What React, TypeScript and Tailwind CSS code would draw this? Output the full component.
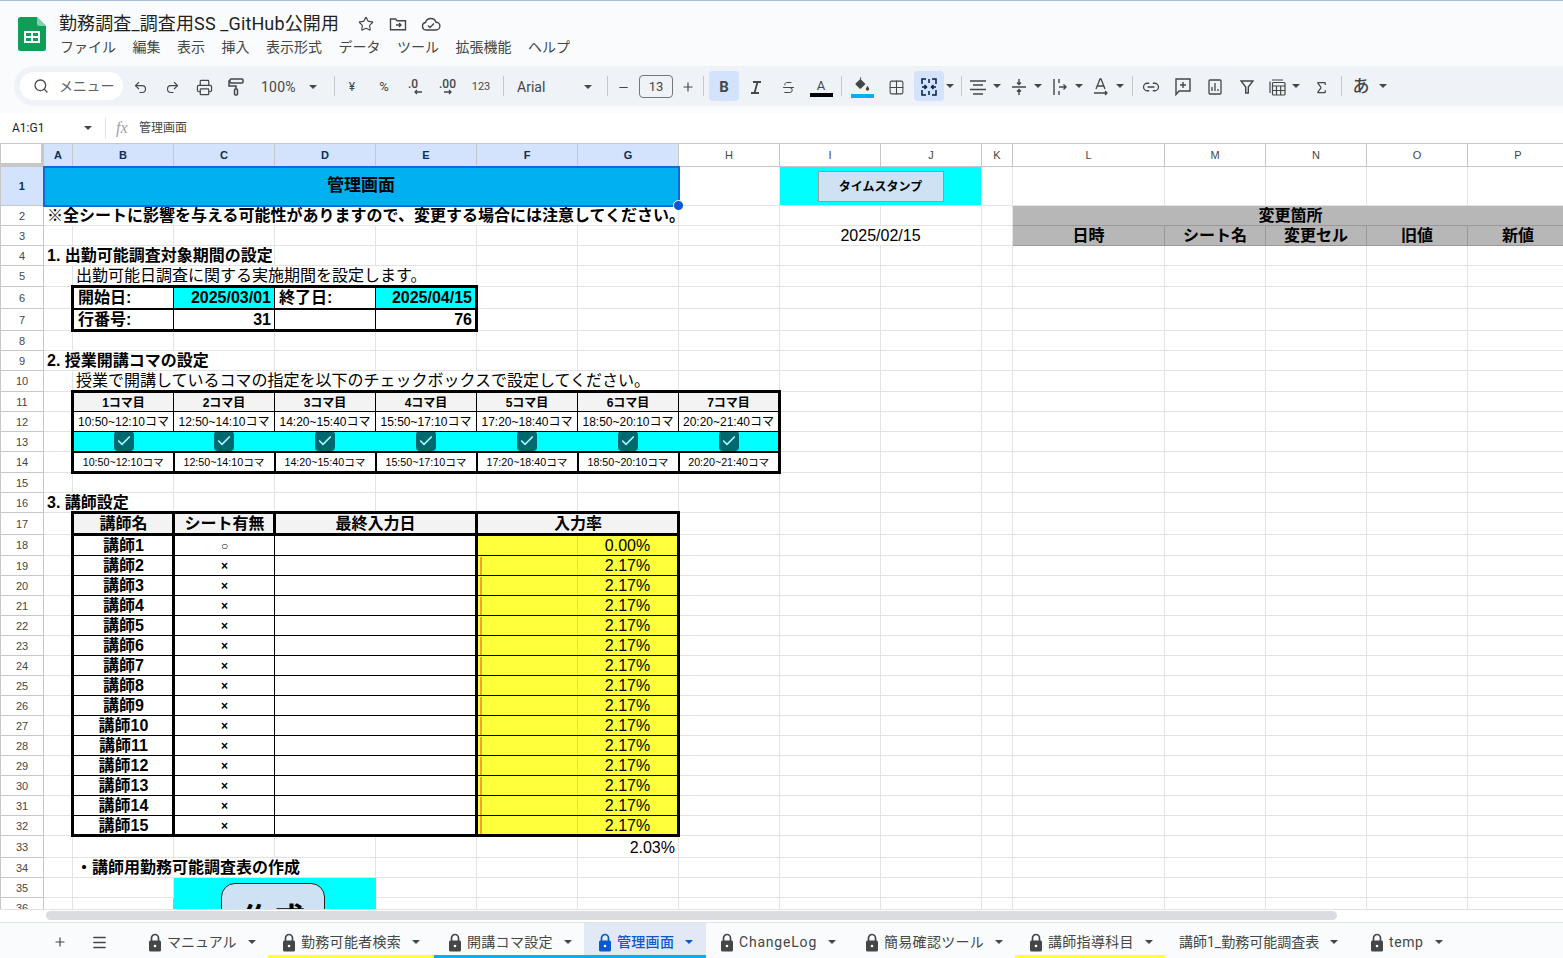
import React from 'react';
import {
  Check,
  Grid2x2,
  Link2,
  Menu,
  Minus,
  Plus,
  Printer,
  Redo2,
  Search,
  Sigma,
  Star,
  Strikethrough,
  Undo2,
} from 'lucide-react';

const teachers = ['講師2', '講師3', '講師4', '講師5', '講師6', '講師7', '講師8', '講師9', '講師10', '講師11', '講師12', '講師13', '講師14', '講師15'];
const slots = ['10:50~12:10コマ', '12:50~14:10コマ', '14:20~15:40コマ', '15:50~17:10コマ', '17:20~18:40コマ', '18:50~20:10コマ', '20:20~21:40コマ'];
const columnWidths = ['w-[43px]', 'w-[29px]', 'w-[101px]', 'w-[101px]', 'w-[101px]', 'w-[101px]', 'w-[101px]', 'w-[101px]', 'w-[101px]', 'w-[101px]', 'w-[101px]', 'w-[31px]', 'w-[152px]', 'w-[101px]', 'w-[101px]', 'w-[101px]', 'w-[101px]'];
const columnLetters = ['A', 'B', 'C', 'D', 'E', 'F', 'G', 'H', 'I', 'J', 'K', 'L', 'M', 'N', 'O', 'P'];

const Caret = ({ className = 'w-[12px]', color = 'fill-[#444746]' }: { className?: string; color?: string }) => (
  <span className={`flex shrink-0 items-center justify-center ${className}`}>
    <svg width="8" height="4" viewBox="0 0 8 4"><path d="M0 0h8L4 4z" className={color} /></svg>
  </span>
);

const Sep = ({ className = '' }: { className?: string }) => <div className={`h-[20px] w-px shrink-0 bg-[#c7c7c7] ${className}`} />;

const Btn = ({ w = 'w-[30px]', className = '', children }: { w?: string; className?: string; children: React.ReactNode }) => (
  <div className={`flex h-[30px] shrink-0 items-center justify-center pt-[2px] text-[#444746] ${w} ${className}`}>{children}</div>
);

const Lock = ({ color = '#444746' }: { color?: string }) => (
  <svg width="14" height="19" viewBox="0 0 14 19" className="shrink-0">
    <path d="M3.5 8V5a3.5 3.5 0 0 1 7 0v3" fill="none" stroke={color} strokeWidth="1.7" />
    <rect x="1" y="7.5" width="12" height="11" rx="1.5" fill={color} />
    <circle cx="7" cy="13" r="1.3" fill="#fff" />
  </svg>
);

const Td = ({ className = '', ...rest }: React.TdHTMLAttributes<HTMLTableCellElement>) => (
  <td className={`border border-[#e2e3e3] px-0 pt-px pb-0 ${className}`} {...rest} />
);

// cell of one of the black ruled tables
const Bx = ({ className = '', ...rest }: React.TdHTMLAttributes<HTMLTableCellElement>) => (
  <td className={`border border-black px-0 pt-px pb-0 ${className}`} {...rest} />
);

const Blanks = ({ n }: { n: number }) => (
  <>
    {Array.from({ length: n }).map((_, i) => (
      <Td key={i} />
    ))}
  </>
);

const RowHead = ({ n, selected = false }: { n: number; selected?: boolean }) => (
  <td
    className={`border border-[#c7c7c7] p-0 text-center text-[11px] ${
      selected ? 'bg-[#d3e3fd] font-bold text-[#0b2e5c]' : 'bg-white text-[#444746]'
    }`}
  >
    {n}
  </td>
);

const Tab = ({
  label,
  width,
  locked = true,
  active = false,
  bar = '',
  text = 'tracking-[0.3px]',
}: {
  label: string;
  width: string;
  locked?: boolean;
  active?: boolean;
  bar?: string;
  text?: string;
}) => (
  <div className={`relative flex h-full shrink-0 items-center pt-[3px] pl-[14px] ${width} ${active ? 'bg-[#e1e9f7]' : ''}`}>
    {locked && <Lock color={active ? '#0b57d0' : '#444746'} />}
    <span className={`text-[14px] whitespace-nowrap ${locked ? 'ml-[5px]' : ''} ${active ? 'font-medium text-[#0b57d0]' : 'text-[#444746]'} ${text}`}>{label}</span>
    <Caret className="ml-[11px] w-[8px]" color={active ? 'fill-[#0b57d0]' : 'fill-[#444746]'} />
    {bar && <div className={`absolute right-0 bottom-0 left-0 h-[3px] ${bar}`} />}
  </div>
);

export default function App() {
  return (
    <div className="flex h-screen w-full flex-col overflow-hidden bg-[#f9fbfd] [font-family:Roboto,'Noto_Sans_CJK_JP',sans-serif] text-[#1f1f1f]">
      {/* Title bar and menus */}
      <div className="flex h-[66px] shrink-0 border-t border-[#a9c0d8] pl-[18px]">
        <svg width="28" height="34" viewBox="0 0 28 34" className="mt-[16px] shrink-0">
          <path d="M2.5 0H19l9 9v22.5a2.5 2.5 0 0 1-2.5 2.5h-23A2.5 2.5 0 0 1 0 31.500v-29A2.500 2.500 0 0 1 2.500 0z" fill="#0f9d58" />
          <path d="M19 0l9 9h-6.500A2.500 2.500 0 0 1 19 6.500z" fill="#87ceac" />
          <path d="M6 14h16v12H6z" fill="#fff" />
          <path d="M8 16h5v3H8zM15 16h5v3h-5zM8 21h5v3H8zM15 21h5v3h-5z" fill="#0f9d58" />
        </svg>
        <div className="ml-[13px] flex min-w-0 flex-col">
          <div className="mt-[11px] flex h-[24px] items-center">
            <span className="w-[280px] text-[18px] leading-[24px] tracking-[0.12px] whitespace-nowrap">勤務調査_調査用SS _GitHub公開用</span>
            <Star className="ml-[19px] text-[#444746]" size={16} strokeWidth={1.7} />
            <svg width="18" height="16" viewBox="0 0 18 16" fill="none" stroke="#444746" strokeWidth="1.4" className="ml-[15px]">
              <path d="M1.500 3h5l1.500 1.700h8.500v9h-15z" />
              <path d="M7 9h5M10 7l2 2-2 2" />
            </svg>
            <svg width="20" height="14" viewBox="0 0 20 14" fill="none" stroke="#444746" strokeWidth="1.400" className="ml-[14px]">
              <path d="M5 13a3.800 3.800 0 0 1-.5-7.500A5.500 5.500 0 0 1 15 5.200a3.900 3.900 0 0 1 0 7.800z" />
              <path d="M7 8.500l2 2 4-4" />
            </svg>
          </div>
          <div className="mt-[1px] flex gap-[16.500px] pl-[1px] text-[14px] leading-[20px] text-[#444746]">
            {['ファイル', '編集', '表示', '挿入', '表示形式', 'データ', 'ツール', '拡張機能', 'ヘルプ'].map((m) => (
              <span key={m} className="whitespace-nowrap">{m}</span>
            ))}
          </div>
        </div>
      </div>

      {/* Toolbar */}
      <div className="ml-[14px] flex h-[40px] shrink-0 items-center rounded-l-[20px] bg-[#eff3f8] pl-[6px]">
        <div className="flex h-[28px] w-[103px] shrink-0 items-center rounded-full bg-white pl-[13px] text-[14px] text-[#5f6368]">
          <Search size={16} strokeWidth={1.900} className="text-[#444746]" />
          <span className="ml-[10px] whitespace-nowrap tracking-[-0.2px]">メニュー</span>
        </div>
        <Btn w="w-[32px]" className="ml-[1px]"><Undo2 size={15} strokeWidth={1.800} /></Btn>
        <Btn w="w-[32px]"><Redo2 size={15} strokeWidth={1.800} /></Btn>
        <Btn w="w-[32px]"><Printer size={17} strokeWidth={1.700} /></Btn>
        <Btn w="w-[32px]">
          <svg width="16" height="18" viewBox="0 0 16 18" fill="none" stroke="#444746" strokeWidth="1.500">
            <rect x="2" y="1" width="13" height="4" rx="1" />
            <path d="M2 3H1v5h7v3" />
            <rect x="6.500" y="11" width="3" height="6" rx="1" />
          </svg>
        </Btn>
        <div className="flex w-[82px] shrink-0 items-center pt-[2px] pl-[9px] text-[14px] tracking-[0.2px] text-[#444746]">
          <span>100%</span>
          <Caret className="ml-[10px] w-[14px]" />
        </div>
        <Sep className="mr-[1px]" />
        <Btn w="w-[32px]" className="text-[12px]">¥</Btn>
        <Btn w="w-[32px]" className="text-[13px]">%</Btn>
        <Btn w="w-[32px]">
          <svg width="18" height="18" viewBox="0 0 18 18">
            <text x="1" y="10" fontSize="12" fill="#444746" fontWeight="500">.0</text>
            <path d="M15 14H8M10 12l-2 2 2 2" fill="none" stroke="#444746" strokeWidth="1.300" />
          </svg>
        </Btn>
        <Btn w="w-[32px]">
          <svg width="20" height="18" viewBox="0 0 20 18">
            <text x="1" y="10" fontSize="12" fill="#444746" fontWeight="500">.00</text>
            <path d="M6 14h7M11 12l2 2-2 2" fill="none" stroke="#444746" strokeWidth="1.300" />
          </svg>
        </Btn>
        <Btn w="w-[32px]" className="ml-[1px] text-[11px]">123</Btn>
        <Sep className="ml-[6px]" />
        <div className="flex w-[103px] shrink-0 items-center pt-[2px] pl-[13px] text-[14px] text-[#444746]">
          <span className="w-[65px]">Arial</span>
          <Caret className="w-[12px]" />
        </div>
        <Sep />
        <Btn w="w-[31px]"><Minus size={13} strokeWidth={2} /></Btn>
        <div className="mt-[1px] flex h-[23px] w-[34px] shrink-0 items-center justify-center rounded-[4px] border border-[#747775] text-[13px] text-[#444746]">13</div>
        <Btn><Plus size={14} strokeWidth={2} /></Btn>
        <Sep />
        <Btn className="ml-[5px] rounded-[4px] bg-[#d3e3fd] text-[15px] font-bold text-[#041e49]">B</Btn>
        <Btn className="ml-[2px]">
          <svg width="12" height="13" viewBox="0 0 12 13" fill="none" stroke="#444746" strokeWidth="1.800">
            <path d="M3 1h8M1 12h8M7.500 1L4.500 12" />
          </svg>
        </Btn>
        <Btn className="ml-[2px]"><Strikethrough size={15} strokeWidth={1.600} /></Btn>
        <Btn className="ml-[3px]">
          <div className="flex flex-col items-center">
            <span className="text-[13px] leading-[15px]">A</span>
            <div className="h-[4px] w-[23px] bg-black" />
          </div>
        </Btn>
        <Sep className="ml-[5px]" />
        <Btn className="ml-[5px]">
          <div className="flex flex-col items-center">
            <svg width="15" height="15" viewBox="0 0 15 15" className="fill-[#444746]">
              <path d="M5.500 0l1 1-1 1 5 5-4.500 4.500a1 1 0 0 1-1.400 0L.800 7.700a1 1 0 0 1 0-1.400L4.800 2.500z" />
              <path d="M12.500 9s1.700 2 1.700 3a1.700 1.700 0 0 1-3.400 0c0-1 1.700-3 1.700-3z" />
            </svg>
            <div className="mt-[2px] h-[4px] w-[23px] bg-[#00b0f0]" />
          </div>
        </Btn>
        <Btn className="ml-[4px]"><Grid2x2 size={17} strokeWidth={1.500} /></Btn>
        <Btn className="ml-[3px] rounded-[4px] bg-[#d3e3fd]">
          <svg width="16" height="18" viewBox="0 0 16 18" fill="none" stroke="#041e49" strokeWidth="1.500">
            <path d="M5 1H1v5M11 1h4v5M5 17H1v-5M11 17h4v-5M1 9h4M3.500 7l2 2-2 2M15 9h-4M12.500 7l-2 2 2 2M8 1v4M8 13v4" />
          </svg>
        </Btn>
        <Caret />
        <Sep className="ml-[5px]" />
        <Btn w="w-[26px]" className="ml-[3px]">
          <svg width="16" height="15" viewBox="0 0 16 15" fill="none" stroke="#444746" strokeWidth="1.400">
            <path d="M0 1h16M3 5h10M0 9.500h16M3 14h10" />
          </svg>
        </Btn>
        <Caret />
        <Btn w="w-[26px]" className="ml-[3px]">
          <svg width="14" height="16" viewBox="0 0 14 16" fill="none" stroke="#444746" strokeWidth="1.400">
            <path d="M0 8h14M7 0v5M5 3.500L7 5.500l2-2M7 16v-5M5 12.500l2-2 2 2" />
          </svg>
        </Btn>
        <Caret />
        <Btn w="w-[26px]" className="ml-[3px]">
          <svg width="14" height="18" viewBox="0 0 14 18" fill="none" stroke="#444746" strokeWidth="1.400">
            <path d="M1 1v16M6 1v4M6 13v4M6 9h7M10.500 6.500L13 9l-2.500 2.500" />
          </svg>
        </Btn>
        <Caret />
        <Btn w="w-[26px]" className="ml-[3px]">
          <svg width="16" height="18" viewBox="0 0 16 18" fill="none" stroke="#444746" strokeWidth="1.300">
            <path d="M3 11l4-10h1l4 10M4.500 8h7M1 15h13M12 13l2 2-2 2" />
          </svg>
        </Btn>
        <Caret />
        <Sep className="ml-[6px]" />
        <Btn className="ml-[3px]"><Link2 size={18} strokeWidth={1.700} /></Btn>
        <Btn className="ml-[2px]">
          <svg width="16" height="18" viewBox="0 0 16 18" fill="none" stroke="#444746" strokeWidth="1.400">
            <path d="M1 1h14v12H4l-3 3.500zM8 4v6M5 7h6" />
          </svg>
        </Btn>
        <Btn className="ml-[2px]">
          <svg width="14" height="16" viewBox="0 0 14 16" fill="none" stroke="#444746" strokeWidth="1.300">
            <rect x="1" y="1" width="12" height="14" rx="1" />
            <path d="M4 12V8M7 12V4M10 12v-2" />
          </svg>
        </Btn>
        <Btn className="ml-[2px]">
          <svg width="14" height="14" viewBox="0 0 14 14" fill="none" stroke="#444746" strokeWidth="1.400">
            <path d="M1 1h12L8.300 7v6H5.700V7z" />
          </svg>
        </Btn>
        <Btn w="w-[26px]" className="ml-[2px]">
          <svg width="17" height="17" viewBox="0 0 17 17" fill="none" stroke="#444746" strokeWidth="1.200">
            <path d="M1 14V2.500M3 1h11" />
            <rect x="3.500" y="3.500" width="12.500" height="12.500" rx="1" />
            <path d="M3.500 7h12.500M7.500 7v9M11.700 7v9M3.500 11.500h12.500" />
          </svg>
        </Btn>
        <Caret />
        <Btn className="ml-[4px]"><Sigma size={15} strokeWidth={2} /></Btn>
        <Sep className="ml-[5px]" />
        <Btn className="ml-[4px] text-[17px] font-medium text-[#1f1f1f]">あ</Btn>
        <Caret className="ml-[1px] w-[12px]" />
      </div>

      {/* Formula bar */}
      <div className="mt-[7px] flex h-[30px] shrink-0 items-center bg-white text-[12px]">
        <span className="ml-[12px] w-[70px]">A1:G1</span>
        <Caret className="w-[12px]" />
        <div className="ml-[11px] h-[20px] w-px bg-[#e1e3e1]" />
        <span className="ml-[10px] w-[23px] [font-family:'Liberation_Serif',serif] text-[16px] text-[#9aa0a6] italic">fx</span>
        <span className="text-[#444746]">管理画面</span>
      </div>

      {/* Sheet */}
      <div className="h-[766px] shrink-0 overflow-hidden bg-white [font-family:'Liberation_Sans','Noto_Sans_CJK_JP',sans-serif] text-[16px] leading-[16px] text-black">
        <table className="w-[1568px] table-fixed border-collapse">
          <colgroup>
            {columnWidths.map((w, i) => (
              <col key={i} className={w} />
            ))}
          </colgroup>
          <tbody>
            <tr className="h-[23px]">
              <td className="border border-[#c7c7c7] bg-[#c7c7c7] p-0 align-top">
                <div className="h-[19px] w-[40px] bg-white" />
              </td>
              {columnLetters.map((c, i) => (
                <td
                  key={c}
                  className={`border border-[#c7c7c7] p-0 text-center text-[11px] ${
                    i < 7 ? 'bg-[#d3e3fd] font-bold text-[#0b2e5c]' : 'bg-white text-[#444746]'
                  }`}
                >
                  {c}
                </td>
              ))}
            </tr>

            <tr className="h-[39px]">
              <RowHead n={1} selected />
              <td colSpan={7} className="relative border-2 border-[#0b6bd8] bg-[#00b0f0] p-0 text-center text-[17px] font-bold">
                管理画面
                <span className="absolute -right-[6px] -bottom-[6px] z-10 h-[11px] w-[11px] rounded-full border border-white bg-[#0b57d0]" />
              </td>
              <Td />
              <Td colSpan={2} className="bg-[#00ffff]">
                <div className="flex justify-center">
                  <div className="flex h-[31px] w-[126px] items-center justify-center border border-[#999999] bg-[#cfe2f3] text-[12px] font-bold">タイムスタンプ</div>
                </div>
              </Td>
              <Blanks n={6} />
            </tr>

            <tr className="h-[20px]">
              <RowHead n={2} />
              <Td colSpan={7} className="pl-[3px] font-bold whitespace-nowrap">※全シートに影響を与える可能性がありますので、変更する場合には注意してください。</Td>
              <Td />
              <Td />
              <Td />
              <Td />
              <td colSpan={5} className="border border-[#999999] bg-[#b7b7b7] p-0 pt-px text-center font-bold">変更箇所</td>
            </tr>

            <tr className="h-[20px]">
              <RowHead n={3} />
              <Blanks n={8} />
              <Td colSpan={2} className="text-center">2025/02/15</Td>
              <Td />
              {['日時', 'シート名', '変更セル', '旧値', '新値'].map((h) => (
                <td key={h} className="border border-[#999999] bg-[#b7b7b7] p-0 pt-px text-center font-bold">{h}</td>
              ))}
            </tr>

            <tr className="h-[20px]">
              <RowHead n={4} />
              <Td colSpan={3} className="pl-[3px] font-bold whitespace-nowrap">1. 出勤可能調査対象期間の設定</Td>
              <Blanks n={13} />
            </tr>

            <tr className="h-[21px]">
              <RowHead n={5} />
              <Td />
              <Td colSpan={4} className="pl-[3px] whitespace-nowrap">出勤可能日調査に関する実施期間を設定します。</Td>
              <Blanks n={11} />
            </tr>

            <tr className="h-[22px]">
              <RowHead n={6} />
              <Td />
              <Bx className="border-t-[3px] border-b-2 border-l-[3px] pl-[4px] font-bold">開始日:</Bx>
              <Bx className="border-t-[3px] border-b-2 bg-[#00ffff] pr-[3px] text-right font-bold">2025/03/01</Bx>
              <Bx className="border-t-[3px] border-b-2 pl-[4px] font-bold">終了日:</Bx>
              <Bx className="border-t-[3px] border-r-[3px] border-b-2 bg-[#00ffff] pr-[3px] text-right font-bold">2025/04/15</Bx>
              <Blanks n={11} />
            </tr>

            <tr className="h-[22px]">
              <RowHead n={7} />
              <Td />
              <Bx className="border-b-[3px] border-l-[3px] pl-[4px] font-bold">行番号:</Bx>
              <Bx className="border-b-[3px] pr-[3px] text-right font-bold">31</Bx>
              <Bx className="border-b-[3px]" />
              <Bx className="border-r-[3px] border-b-[3px] pr-[3px] text-right font-bold">76</Bx>
              <Blanks n={11} />
            </tr>

            <tr className="h-[20px]">
              <RowHead n={8} />
              <Blanks n={16} />
            </tr>

            <tr className="h-[20px]">
              <RowHead n={9} />
              <Td colSpan={3} className="pl-[3px] font-bold whitespace-nowrap">2. 授業開講コマの設定</Td>
              <Blanks n={13} />
            </tr>

            <tr className="h-[21px]">
              <RowHead n={10} />
              <Td />
              <Td colSpan={6} className="pl-[3px] whitespace-nowrap">授業で開講しているコマの指定を以下のチェックボックスで設定してください。</Td>
              <Blanks n={9} />
            </tr>

            <tr className="h-[20px]">
              <RowHead n={11} />
              <Td />
              {slots.map((_, i) => (
                <Bx
                  key={i}
                  className={`border-t-[3px] bg-[#f3f3f3] text-center text-[12px] font-bold ${i === 0 ? 'border-l-[3px]' : ''} ${i === 6 ? 'border-r-[3px]' : ''}`}
                >
                  {i + 1}コマ目
                </Bx>
              ))}
              <Blanks n={8} />
            </tr>

            <tr className="h-[20px]">
              <RowHead n={12} />
              <Td />
              {slots.map((s, i) => (
                <Bx key={i} className={`text-center text-[12px] whitespace-nowrap ${i === 0 ? 'border-l-[3px]' : ''} ${i === 6 ? 'border-r-[3px]' : ''}`}>
                  {s}
                </Bx>
              ))}
              <Blanks n={8} />
            </tr>

            <tr className="h-[20px]">
              <RowHead n={13} />
              <Td />
              {slots.map((_, i) => (
                <td key={i} className={`border border-black border-r-[#00ffff] border-b-2 border-l-[#00ffff] bg-[#00ffff] p-0 ${i === 0 ? 'border-l-[3px] border-l-black' : ''} ${i === 6 ? 'border-r-[3px] border-r-black' : ''}`}>
                  <div className="mx-auto -my-px flex h-[20px] w-[20px] items-center justify-center rounded-[4px] bg-[#00696f]">
                    <Check size={16} strokeWidth={2.500} className="text-[#a8f5f8]" />
                  </div>
                </td>
              ))}
              <Blanks n={8} />
            </tr>

            <tr className="h-[21px]">
              <RowHead n={14} />
              <Td />
              {slots.map((s, i) => (
                <Bx key={i} className={`border-r-2 border-b-[3px] border-l-2 text-center text-[10.700px] whitespace-nowrap ${i === 0 ? 'border-l-[3px]' : ''} ${i === 6 ? 'border-r-[3px]' : ''}`}>
                  {s}
                </Bx>
              ))}
              <Blanks n={8} />
            </tr>

            <tr className="h-[20px]">
              <RowHead n={15} />
              <Blanks n={16} />
            </tr>

            <tr className="h-[20px]">
              <RowHead n={16} />
              <Td colSpan={2} className="pl-[3px] font-bold whitespace-nowrap">3. 講師設定</Td>
              <Blanks n={14} />
            </tr>

            <tr className="h-[22px]">
              <RowHead n={17} />
              <Td />
              <Bx className="border-t-[3px] border-r-[3px] border-b-[3px] border-l-[3px] bg-[#f3f3f3] pl-[1px] text-center font-bold">講師名</Bx>
              <Bx className="border-t-[3px] border-r-[3px] border-b-[3px] bg-[#f3f3f3] pl-[1px] text-center font-bold">シート有無</Bx>
              <Bx colSpan={2} className="border-t-[3px] border-r-[3px] border-b-[3px] bg-[#f3f3f3] text-center font-bold">最終入力日</Bx>
              <Bx colSpan={2} className="border-t-[3px] border-r-[3px] border-b-[3px] bg-[#f3f3f3] pl-[1px] text-center font-bold">入力率</Bx>
              <Blanks n={9} />
            </tr>

            <tr className="h-[21px]">
              <RowHead n={18} />
              <Td />
              <Bx className="border-r-[3px] border-l-[3px] pl-[1px] text-center font-bold">講師1</Bx>
              <Bx className="text-center text-[12px]">○</Bx>
              <Bx colSpan={2} className="border-r-[3px]" />
              <Bx className="border-r-[#e6e63a] bg-[#ffff3b]" />
              <Bx className="border-r-[3px] bg-[#ffff3b] text-center">0.00%</Bx>
              <Blanks n={9} />
            </tr>

            {teachers.map((name, i) => (
              <tr key={name} className="h-[20px]">
                <RowHead n={i + 19} />
                <Td />
                <Bx className={`border-r-[3px] border-l-[3px] pl-[1px] text-center font-bold ${i === 13 ? 'border-b-[3px]' : ''}`}>{name}</Bx>
                <Bx className={`text-center text-[12px] font-bold ${i === 13 ? 'border-b-[3px]' : ''}`}>×</Bx>
                <Bx colSpan={2} className={`border-r-[3px] ${i === 13 ? 'border-b-[3px]' : ''}`} />
                <td className={`border border-black border-r-[#e6e63a] bg-[#ffff3b] p-0 pl-[2px] ${i === 13 ? 'border-b-[3px]' : ''}`}>
                  <div className="h-[18px] w-[2px] bg-[#f6a02e]" />
                </td>
                <Bx className={`border-r-[3px] bg-[#ffff3b] text-center ${i === 13 ? 'border-b-[3px]' : ''}`}>2.17%</Bx>
                <Blanks n={9} />
              </tr>
            ))}

            <tr className="h-[22px]">
              <RowHead n={33} />
              <Blanks n={6} />
              <Td className="pr-[3px] text-right">2.03%</Td>
              <Blanks n={9} />
            </tr>

            <tr className="h-[20px]">
              <RowHead n={34} />
              <Td />
              <Td colSpan={3} className="pl-[3px] font-bold whitespace-nowrap">・講師用勤務可能調査表の作成</Td>
              <Blanks n={12} />
            </tr>

            <tr className="h-[20px]">
              <RowHead n={35} />
              <Td />
              <Td />
              <td colSpan={2} rowSpan={2} className="relative border border-[#00ffff] bg-[#00ffff] p-0">
                <div className="absolute top-[5px] left-[47px] flex h-[70px] w-[104px] justify-center rounded-[14px] border border-[#222222] bg-[#cfe2f3] pt-[18px] text-[32px] leading-[36px] font-bold">作成</div>
              </td>
              <Blanks n={12} />
            </tr>

            <tr className="h-[20px]">
              <RowHead n={36} />
              <Td />
              <Td />
              <Blanks n={12} />
            </tr>
          </tbody>
        </table>
      </div>

      {/* Horizontal scrollbar */}
      <div className="flex h-[13px] shrink-0 border-t border-[#e1e3e1] bg-white">
        <div className="mt-px ml-[46px] h-[9px] w-[1291px] rounded-full bg-[#dadce0]" />
      </div>

      {/* Sheet tabs */}
      <div className="flex min-h-0 flex-1 items-center border-t border-[#e1e3e1] bg-[#f9fbfd]">
        <div className="flex w-[134px] shrink-0 items-center pt-[3px] pl-[53px] text-[#444746]">
          <Plus size={14} strokeWidth={2} />
          <Menu size={17} strokeWidth={2} className="ml-[24px]" />
        </div>
        <Tab label="マニュアル" width="w-[134px]" text="tracking-[0px]" />
        <Tab label="勤務可能者検索" width="w-[166px]" bar="bg-[#ffff3b]" />
        <Tab label="開講コマ設定" width="w-[150px]" bar="bg-[#00b0f0]" />
        <Tab label="管理画面" width="w-[122px]" active bar="bg-[#00b0f0]" />
        <Tab label="ChangeLog" width="w-[145px]" text="tracking-[0.8px]" />
        <Tab label="簡易確認ツール" width="w-[164px]" />
        <Tab label="講師指導科目" width="w-[150px]" bar="bg-[#ffff3b]" />
        <Tab label="講師1_勤務可能調査表" width="w-[191px]" locked={false} text="tracking-[0px]" />
        <Tab label="temp" width="w-[105px]" text="tracking-[0.6px]" />
      </div>
    </div>
  );
}
